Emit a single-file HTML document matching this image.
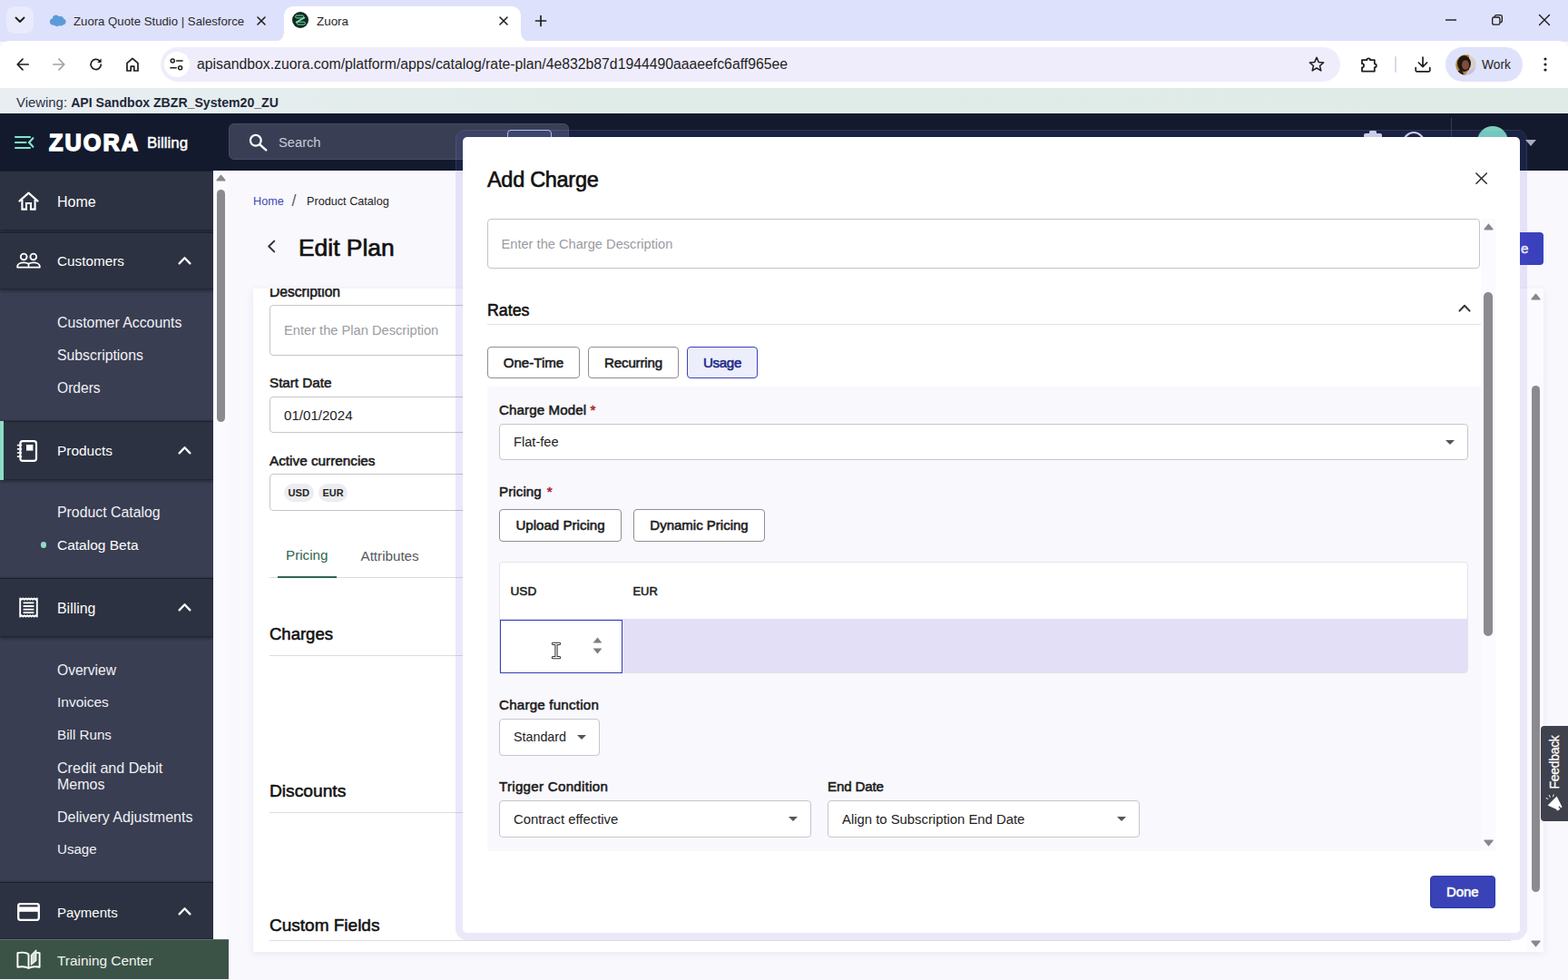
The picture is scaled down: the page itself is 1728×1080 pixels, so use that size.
<!DOCTYPE html>
<html lang="en">
<head>
<meta charset="utf-8">
<title>Zuora</title>
<style>
*{box-sizing:border-box;margin:0;padding:0}
html,body{width:1728px;height:1080px;overflow:hidden;background:#f9f8fd;font-family:"Liberation Sans",sans-serif;color:#111}
#root{position:relative;width:1728px;height:1080px;overflow:hidden}
.a{position:absolute}
.t{position:absolute;white-space:nowrap;line-height:20px;height:20px}
.b{font-weight:bold}
.sb{-webkit-text-stroke:.55px}
svg{position:absolute;overflow:visible}
/* CHROME */
#tabstrip{left:0;top:0;width:1728px;height:46px;background:#dee1fb}
#toolbar{left:0;top:45px;width:1728px;height:52px;background:#fff;border-radius:10px 10px 0 0}
#urlbar{left:177px;top:52px;width:1300px;height:38px;border-radius:19px;background:#efedfb}
#infobar{left:0;top:97px;width:1728px;height:28px;background:linear-gradient(90deg,#e9eef2 0,#e0ece8 40%,#e0ebe8 100%)}
/* APP HEADER */
#hdr{left:0;top:125px;width:1728px;height:63px;background:#131a2e}
#search{left:252px;top:136px;width:375px;height:40px;border-radius:6px;background:#393e54;border:1px solid #474d66}
/* SIDEBAR */
#side{left:0;top:188px;width:235px;height:848px;background:#393e52}
.sh{clip-path:inset(-6px 0 -6px 0);position:absolute;left:0;width:235px;background:#2c3241;border-top:1.5px solid #1b2131;border-bottom:1px solid #20263a;box-shadow:0 2px 3px rgba(0,0,0,.3),0 -1px 2px rgba(0,0,0,.2)}
.st{color:#fff;font-size:17px}
.si{color:#f1f1f6;font-size:16px}
/* MAIN */
#main{left:235px;top:188px;width:1493px;height:892px;background:#f9f8fd}
#card{left:279px;top:318px;width:1422px;height:731px;background:#fff;box-shadow:0 2px 8px rgba(120,110,180,.12)}
.lbl{font-size:15px;font-weight:bold;color:#1a1a1a}
.inp{position:absolute;background:#fff;border:1px solid #c6c6cb;border-radius:4px}
.hl{position:absolute;height:1px;background:#dcdce0}
.h2{font-size:19px;font-weight:bold;color:#111}
/* MODAL */
#modal{left:510px;top:151px;width:1165px;height:877px;background:#fff;border-radius:5px;}
.btn{-webkit-text-stroke:.55px;position:absolute;background:#fff;border:1px solid #8e8e93;border-radius:4px;font-size:15px;font-weight:bold;color:#1a1a1a;text-align:center;white-space:nowrap}
</style>
</head>
<body>
<div id="root">

<!-- ======= BROWSER CHROME ======= -->
<div id="tabstrip" class="a"></div>
<div id="toolbar" class="a"></div>
<!-- tab search button -->
<div class="a" style="left:7px;top:7px;width:30px;height:30px;border-radius:9px;background:#e9ebfc"></div>
<svg style="left:16px;top:18px" width="12" height="8" viewBox="0 0 12 8"><path d="M1.5 1.5 L6 6 L10.5 1.5" fill="none" stroke="#1f1f1f" stroke-width="1.9" stroke-linecap="round" stroke-linejoin="round"/></svg>
<!-- tab 1 favicon: salesforce cloud -->
<svg style="left:54px;top:15px" width="19" height="14" viewBox="0 0 19 14"><path d="M4.6 12.6a3.6 3.6 0 0 1-.9-7.1 4.1 4.1 0 0 1 7.3-2.3 3.7 3.7 0 0 1 5.3 2.6 3.4 3.4 0 0 1-1.1 6.6 3 3 0 0 1-3.9.6 3.4 3.4 0 0 1-4.6.2 3.6 3.6 0 0 1-2.1-.6z" fill="#5b9bd8"/></svg>
<div class="t" style="left:81px;top:14px;font-size:13.2px;color:#2a2a2e">Zuora Quote Studio | Salesforce</div>
<svg style="left:283px;top:18px" width="10" height="10" viewBox="0 0 10 10"><path d="M1 1L9 9M9 1L1 9" stroke="#1f1f1f" stroke-width="1.6" stroke-linecap="round"/></svg>
<!-- active tab -->
<div class="a" style="left:313px;top:7px;width:261px;height:39px;background:#fff;border-radius:10px 10px 0 0"></div>
<svg style="left:303px;top:36px" width="10" height="10" viewBox="0 0 10 10"><path d="M10 0V10H0A10 10 0 0 0 10 0Z" fill="#fff"/></svg>
<svg style="left:574px;top:36px" width="10" height="10" viewBox="0 0 10 10"><path d="M0 0V10H10A10 10 0 0 1 0 0Z" fill="#fff"/></svg>
<svg style="left:321.8px;top:13.3px" width="18" height="18" viewBox="0 0 18 18"><circle cx="9" cy="9" r="9" fill="#0f2a21"/><rect x="3.6" y="4" width="9" height="2.900" rx="1.450" fill="none" stroke="#7fe3b6" stroke-width="1"/><rect x="5.400" y="11.200" width="9" height="2.900" rx="1.450" fill="none" stroke="#7fe3b6" stroke-width="1"/><path d="M13.400 6.600L4.600 11.600" stroke="#7fe3b6" stroke-width="1.700" stroke-linecap="round"/></svg>
<div class="t" style="left:349px;top:14px;font-size:13.4px;color:#1f1f1f">Zuora</div>
<svg style="left:550px;top:18px" width="10" height="10" viewBox="0 0 10 10"><path d="M1 1L9 9M9 1L1 9" stroke="#1f1f1f" stroke-width="1.6" stroke-linecap="round"/></svg>
<!-- new tab -->
<svg style="left:590px;top:17px" width="12" height="12" viewBox="0 0 12 12"><path d="M6 .5V11.5M.5 6H11.5" stroke="#1f1f1f" stroke-width="1.7" stroke-linecap="round"/></svg>
<!-- window controls -->
<svg style="left:1593px;top:21px" width="12" height="2" viewBox="0 0 12 2"><path d="M0 1H12" stroke="#1a1a1a" stroke-width="1.4"/></svg>
<svg style="left:1644px;top:16px" width="12" height="12" viewBox="0 0 12 12"><rect x=".7" y="3" width="8.2" height="8.2" rx="1.8" fill="none" stroke="#1a1a1a" stroke-width="1.3"/><path d="M3.2 2.8V2.5A1.8 1.8 0 0 1 5 .7H9.4A1.9 1.9 0 0 1 11.3 2.6V7A1.8 1.8 0 0 1 9.5 8.8H9.2" fill="none" stroke="#1a1a1a" stroke-width="1.3"/></svg>
<svg style="left:1696px;top:16px" width="12" height="12" viewBox="0 0 12 12"><path d="M.5 .5L11.5 11.5M11.5 .5L.5 11.5" stroke="#1a1a1a" stroke-width="1.4" stroke-linecap="round"/></svg>

<div id="urlbar" class="a"></div>
<!-- nav icons -->
<svg style="left:18px;top:64px" width="14" height="14" viewBox="0 0 14 14"><path d="M13.2 7H1.4M7 1.2L1.2 7L7 12.8" fill="none" stroke="#1f1f1f" stroke-width="1.7" stroke-linecap="round" stroke-linejoin="round"/></svg>
<svg style="left:58px;top:64px" width="14" height="14" viewBox="0 0 14 14"><path d="M.8 7H12.6M7 1.2L12.8 7L7 12.8" fill="none" stroke="#a3a3a6" stroke-width="1.7" stroke-linecap="round" stroke-linejoin="round"/></svg>
<svg style="left:99px;top:64px" width="14" height="14" viewBox="0 0 14 14"><path d="M12.3 7.2A5.6 5.6 0 1 1 10.6 2.9" fill="none" stroke="#1f1f1f" stroke-width="1.7" stroke-linecap="round"/><path d="M12.6 .6V5H8.2Z" fill="#1f1f1f"/></svg>
<svg style="left:139px;top:63px" width="14" height="16" viewBox="0 0 14 16"><path d="M1 6.6L7 1.4L13 6.6V15H8.8V10.2H5.2V15H1Z" fill="none" stroke="#1f1f1f" stroke-width="1.7" stroke-linejoin="round"/></svg>
<!-- site info -->
<div class="a" style="left:181px;top:57px;width:28px;height:28px;border-radius:14px;background:#fff"></div>
<svg style="left:187px;top:64px" width="15" height="14" viewBox="0 0 15 14"><circle cx="3.2" cy="3" r="2" fill="none" stroke="#1f1f1f" stroke-width="1.5"/><path d="M7.6 3H14" stroke="#1f1f1f" stroke-width="1.6" stroke-linecap="round"/><circle cx="11.6" cy="10.8" r="2" fill="none" stroke="#1f1f1f" stroke-width="1.5"/><path d="M1 10.8H7.2" stroke="#1f1f1f" stroke-width="1.6" stroke-linecap="round"/></svg>
<div class="t" style="left:217px;top:61px;font-size:15.77px;color:#1f1f1f">apisandbox.zuora.com/platform/apps/catalog/rate-plan/4e832b87d1944490aaaeefc6aff965ee</div>
<!-- star -->
<svg style="left:1442px;top:62px" width="18" height="17" viewBox="0 0 18 17"><path d="M9 1.3L11.2 6.4L16.7 6.9L12.5 10.5L13.8 15.9L9 13L4.2 15.9L5.5 10.5L1.3 6.9L6.8 6.4Z" fill="none" stroke="#1f1f1f" stroke-width="1.5" stroke-linejoin="round"/></svg>
<!-- extensions -->
<svg style="left:1499px;top:61px" width="20" height="19" viewBox="0 0 20 19"><path d="M2 5.200H7.300A1.900 1.900 0 0 1 11.100 5.200H15.800V9.300A2 2 0 0 1 15.800 13.300V17.600H2V13.400A2.100 2.100 0 0 0 2 9.200Z" fill="none" stroke="#1f1f1f" stroke-width="1.800" stroke-linejoin="round"/></svg>
<div class="a" style="left:1537px;top:62px;width:2px;height:18px;background:#d9dbe9;border-radius:1px"></div>
<!-- download -->
<svg style="left:1559px;top:62px" width="18" height="18" viewBox="0 0 18 18"><path d="M9 1V11.4M4.4 7L9 11.6L13.6 7M1.2 12.6V15.4A1.4 1.4 0 0 0 2.6 16.8H15.4A1.4 1.4 0 0 0 16.8 15.4V12.6" fill="none" stroke="#1f1f1f" stroke-width="1.7" stroke-linecap="round" stroke-linejoin="round"/></svg>
<!-- profile pill -->
<div class="a" style="left:1593px;top:52px;width:85px;height:38px;border-radius:19px;background:#dfe2fb"></div>
<svg style="left:1604px;top:60px" width="23" height="23" viewBox="0 0 23 23"><defs><clipPath id="av"><circle cx="11.500" cy="11.500" r="11.200"/></clipPath><filter id="avb" x="-10%" y="-10%" width="120%" height="120%"><feGaussianBlur stdDeviation=".7"/></filter></defs><g clip-path="url(#av)"><g filter="url(#avb)"><rect x="-2" y="-2" width="27" height="27" fill="#b08a30"/><rect x="15" y="-2" width="10" height="27" fill="#d9cfc8"/><ellipse cx="9.500" cy="10" rx="7.500" ry="9" fill="#241712"/><ellipse cx="11" cy="11.500" rx="4" ry="5.200" fill="#7d4f36"/><path d="M11 23C12 18 16 15.500 24 15V24Z" fill="#cdbfe0"/><path d="M0 24C0 19 3 17 7 17L10 24Z" fill="#2a1c18"/></g></g></svg>
<div class="t" style="left:1633px;top:62px;font-size:13.8px;color:#1f1f1f">Work</div>
<svg style="left:1701px;top:63px" width="4" height="16" viewBox="0 0 4 16"><circle cx="2" cy="2" r="1.6" fill="#1f1f1f"/><circle cx="2" cy="8" r="1.6" fill="#1f1f1f"/><circle cx="2" cy="14" r="1.6" fill="#1f1f1f"/></svg>
<div id="infobar" class="a"></div>
<div class="t" style="left:18px;top:103px;font-size:14.9px;color:#2b3345">Viewing: <span class="b" style="font-size:14.1px;color:#1f2738">API Sandbox ZBZR_System20_ZU</span></div>

<!-- ======= APP HEADER ======= -->
<div id="hdr" class="a"></div>
<!-- hamburger -->
<svg style="left:16px;top:149px" width="22" height="16" viewBox="0 0 22 16"><path d="M1 2H17M1 8H12.500M1 14H17" stroke="#7fe8c5" stroke-width="2.100" stroke-linecap="round"/><path d="M20.4 3.2L16 8L20.4 12.800" fill="none" stroke="#7fe8c5" stroke-width="2.100" stroke-linecap="round" stroke-linejoin="round"/></svg>
<div class="t b" style="left:54px;top:143px;height:28px;line-height:28px;font-size:25.3px;letter-spacing:2px;color:#fff;-webkit-text-stroke:1.5px #fff">ZUORA</div>
<div class="t" style="left:162px;top:148px;font-size:16.9px;color:#fff;-webkit-text-stroke:.45px">Billing</div>
<div id="search" class="a"></div>
<svg style="left:274px;top:147px" width="21" height="20" viewBox="0 0 21 20"><circle cx="7.800" cy="7.800" r="5.900" fill="none" stroke="#fff" stroke-width="2.200"/><path d="M12.400 12.400L19.200 18.400" stroke="#fff" stroke-width="2.500" stroke-linecap="round"/></svg>
<div class="t" style="left:307px;top:147px;font-size:14.7px;color:#c9ccd6">Search</div>
<!-- ctrl-k hint -->
<div class="a" style="left:559px;top:143px;width:49px;height:26px;border:1.5px solid #bcc3e6;border-radius:4px;background:#3a4060"></div>
<!-- right header icons -->
<svg style="left:1502px;top:143px" width="22" height="24" viewBox="0 0 22 24"><rect x="1" y="4" width="20" height="19" rx="2" fill="#d8dae4"/><rect x="7" y="1" width="8" height="5" rx="1.5" fill="#d8dae4"/></svg>
<svg style="left:1545px;top:144px" width="26" height="26" viewBox="0 0 26 26"><circle cx="13" cy="13" r="11" fill="none" stroke="#d8dae4" stroke-width="2.2"/></svg>
<div class="a" style="left:1599px;top:130px;width:1px;height:53px;background:#353c58"></div>
<div class="a" style="left:1628px;top:139px;width:34px;height:34px;border-radius:17px;background:#7ad1ba"></div>
<svg style="left:1681px;top:154px" width="12" height="7" viewBox="0 0 12 7"><path d="M0 0H12L6 7Z" fill="#a9adbb"/></svg>

<!-- ======= MAIN ======= -->
<div id="main" class="a"></div>
<!-- sidebar scrollbar track -->
<div class="a" style="left:235px;top:188px;width:17px;height:848px;background:#fbfaff"></div>
<svg style="left:238px;top:192px" width="11" height="8" viewBox="0 0 11 8"><path d="M5.500 1.400L9.800 6.800H1.200Z" fill="#88888b" stroke="#88888b" stroke-width="1.600" stroke-linejoin="round"/></svg>
<div class="a" style="left:239px;top:209px;width:9px;height:256px;border-radius:4.5px;background:#8b8b8f"></div>
<!-- breadcrumb -->
<div class="t" style="left:279px;top:212px;font-size:12.7px;color:#3f49b3">Home</div>
<div class="t" style="left:321.500px;top:211px;font-size:17.500px;color:#5a5a60">/</div>
<div class="t" style="left:338px;top:212px;font-size:12.66px;color:#222">Product Catalog</div>
<svg style="left:294px;top:264px" width="10" height="15" viewBox="0 0 10 15"><path d="M8.2 1.6L2.2 7.5L8.2 13.4" fill="none" stroke="#333" stroke-width="2" stroke-linecap="round" stroke-linejoin="round"/></svg>
<div class="t" style="left:329px;top:256px;height:35px;line-height:35px;font-size:26.4px;color:#111;-webkit-text-stroke:.7px">Edit Plan</div>
<!-- blue button behind modal (right) -->
<div class="a" style="left:1640px;top:256px;width:61px;height:36px;border-radius:4px;background:#3a41bd"></div>
<div class="t" style="left:1676px;top:264px;font-size:15px;color:#fff;-webkit-text-stroke:.45px">e</div>
<div id="card" class="a"></div>
<div class="a" style="left:279px;top:318px;width:1386px;height:20px;overflow:hidden"><div class="t lbl sb" style="left:18px;top:-6px;font-size:15.6px;font-weight:normal">Description</div></div>
<div class="inp" style="left:297px;top:336.4px;width:1340px;height:55.4px"></div>
<div class="t" style="left:313px;top:354px;font-size:14.66px;color:#9b9ba1">Enter the Plan Description</div>
<div class="t sb" style="left:297px;top:412px;font-size:15.2px;color:#1a1a1a">Start Date</div>
<div class="inp" style="left:297px;top:437px;width:1340px;height:40px"></div>
<div class="t" style="left:313px;top:448px;font-size:15.1px;color:#222">01/01/2024</div>
<div class="t sb" style="left:297px;top:498px;font-size:15.3px;color:#1a1a1a">Active currencies</div>
<div class="inp" style="left:297px;top:522.4px;width:1340px;height:40.4px"></div>
<div class="a" style="left:313px;top:532.6px;width:32.5px;height:20px;border-radius:10px;background:#ececf1"></div>
<div class="t b" style="left:317.5px;top:533px;font-size:11.1px;color:#222">USD</div>
<div class="a" style="left:351px;top:532.6px;width:32px;height:20px;border-radius:10px;background:#ececf1"></div>
<div class="t b" style="left:355.5px;top:533px;font-size:10.9px;color:#222">EUR</div>
<div class="t" style="left:315px;top:602px;font-size:15.2px;color:#2f6650">Pricing</div>
<div class="t" style="left:397.5px;top:603px;font-size:15.2px;color:#55585c">Attributes</div>
<div class="hl" style="left:297px;top:636px;width:1340px"></div>
<div class="a" style="left:306px;top:634.6px;width:65px;height:2px;background:#2f6650"></div>
<div class="t" style="left:297px;top:689px;font-size:18.5px;-webkit-text-stroke:.55px">Charges</div>
<div class="hl" style="left:297px;top:722px;width:1340px"></div>
<div class="t" style="left:297px;top:862px;font-size:19.2px;-webkit-text-stroke:.55px">Discounts</div>
<div class="hl" style="left:297px;top:895px;width:1340px"></div>
<div class="t" style="left:297px;top:1010px;font-size:19px;-webkit-text-stroke:.55px">Custom Fields</div>
<div class="hl" style="left:297px;top:1036px;width:1368px"></div>
<!-- outer scrollbar -->
<div class="a" style="left:1683px;top:318px;width:18px;height:730px;background:#fbfaff"></div>
<svg style="left:1687px;top:323px" width="11" height="8" viewBox="0 0 11 8"><path d="M5.500 1.400L9.800 6.800H1.200Z" fill="#88888b" stroke="#88888b" stroke-width="1.600" stroke-linejoin="round"/></svg>
<div class="a" style="left:1688px;top:425px;width:9px;height:558px;border-radius:4.5px;background:#8b8b8f"></div>
<svg style="left:1687px;top:1036px" width="11" height="8" viewBox="0 0 11 8"><path d="M5.500 6.600L9.800 1.200H1.200Z" fill="#88888b" stroke="#88888b" stroke-width="1.600" stroke-linejoin="round"/></svg>
<!-- feedback tab -->
<div class="a" style="left:1698px;top:800px;width:30px;height:105px;border-radius:4px 0 0 4px;background:#3f414c"></div>
<div class="a" style="left:1698px;top:800px;width:30px;height:105px"><div class="t" style="left:-20px;top:30px;width:70px;text-align:center;font-size:14px;letter-spacing:-.3px;color:#fff;-webkit-text-stroke:.3px;transform:rotate(-90deg);transform-origin:35px 10px">Feedback</div></div>
<svg style="left:1703px;top:875px" width="20" height="20" viewBox="0 0 20 20"><path d="M12.6 2.6L18.6 14.6L16 15.600L15.600 17.400L12.800 18.600L12.400 17L2.600 12.400Z" fill="#fff"/><circle cx="15.600" cy="14.400" r="1" fill="#3f414c"/><path d="M2.800 5.400L1 4.600M5.200 3.400L4.400 1.400M8.600 2.800L9.200 .800" stroke="#fff" stroke-width="1" stroke-linecap="round"/></svg>

<!-- ======= SIDEBAR ======= -->
<div id="side" class="a"></div>
<!-- section headers -->
<div class="sh" style="top:188px;height:66px;box-shadow:0 2px 3px rgba(0,0,0,.35)"></div>
<div class="sh" style="top:256px;height:63px"></div>
<div class="sh" style="top:464px;height:65px"></div>
<div class="a" style="left:0;top:464px;width:4px;height:65px;background:#8fdcc5"></div>
<div class="sh" style="top:637px;height:65px"></div>
<div class="sh" style="top:972px;height:63px"></div>
<!-- Home -->
<svg style="left:20px;top:211px" width="23" height="21" viewBox="0 0 23 21"><path d="M1.4 10.6L11.5 1.6L21.6 10.6" fill="none" stroke="#fff" stroke-width="2.1" stroke-linecap="round" stroke-linejoin="round"/><path d="M4.4 9V19.6H9V13H14V19.6H18.6V9" fill="none" stroke="#fff" stroke-width="2.1" stroke-linejoin="miter"/></svg>
<div class="t st" style="left:63px;top:213px;font-size:16px">Home</div>
<!-- Customers -->
<svg style="left:18px;top:278px" width="27" height="18" viewBox="0 0 27 18"><circle cx="8.2" cy="5" r="3.4" fill="none" stroke="#fff" stroke-width="1.9"/><circle cx="18.8" cy="5" r="3.4" fill="none" stroke="#fff" stroke-width="1.9"/><path d="M1.2 16.6V15.4C1.2 12.4 5.6 11.4 8.2 11.4C9.8 11.4 12 11.8 13.5 12.8C15 11.8 17.2 11.4 18.8 11.4C21.4 11.4 25.8 12.4 25.8 15.4V16.6Z" fill="none" stroke="#fff" stroke-width="1.9" stroke-linejoin="round"/><path d="M13.5 12.8V16.6" stroke="#fff" stroke-width="1.6"/></svg>
<div class="t st" style="left:63px;top:278px;font-size:15.3px">Customers</div>
<svg style="left:196px;top:282px" width="15" height="10" viewBox="0 0 15 10"><path d="M1.6 8.4L7.5 2.2L13.4 8.4" fill="none" stroke="#fff" stroke-width="2.3" stroke-linecap="round" stroke-linejoin="round"/></svg>
<div class="t si" style="left:63px;top:346px;font-size:15.85px">Customer Accounts</div>
<div class="t si" style="left:63px;top:382px;font-size:15.8px">Subscriptions</div>
<div class="t si" style="left:63px;top:418px;font-size:15.6px">Orders</div>
<!-- Products -->
<svg style="left:19px;top:485px" width="23" height="24" viewBox="0 0 23 24"><rect x="3.4" y="1.2" width="17.6" height="21.6" rx="2.6" fill="none" stroke="#fff" stroke-width="2.2"/><rect x="10" y="5" width="7.4" height="6.6" fill="#fff"/><path d="M.6 5.6H4.4M.6 9.8H4.4M.6 14H4.4M.6 18.2H4.4" stroke="#fff" stroke-width="1.7" stroke-linecap="round"/></svg>
<div class="t st" style="left:63px;top:487px;font-size:15.45px">Products</div>
<svg style="left:196px;top:491px" width="15" height="10" viewBox="0 0 15 10"><path d="M1.6 8.4L7.5 2.2L13.4 8.4" fill="none" stroke="#fff" stroke-width="2.3" stroke-linecap="round" stroke-linejoin="round"/></svg>
<div class="t si" style="left:63px;top:555px;font-size:15.85px">Product Catalog</div>
<div class="a" style="left:44.6px;top:596.8px;width:6.8px;height:6.8px;border-radius:50%;background:#8fdcc5"></div>
<div class="t si" style="left:63px;top:591px;font-size:15.5px;color:#fff">Catalog Beta</div>
<!-- Billing -->
<svg style="left:20px;top:658px" width="23" height="23" viewBox="0 0 23 23"><path d="M2.2 1.4l1.55 1.3 1.55-1.3 1.55 1.3 1.55-1.3 1.55 1.3 1.55-1.3 1.55 1.3 1.55-1.3 1.55 1.3 1.55-1.3 1.55 1.3 1.55-1.3V21.6l-1.55-1.3-1.55 1.3-1.55-1.3-1.55 1.3-1.55-1.3-1.55 1.3-1.55-1.3-1.55 1.3-1.55-1.3-1.55 1.3-1.55-1.3-1.55 1.3Z" fill="none" stroke="#fff" stroke-width="1.9" stroke-linejoin="round"/><path d="M5.6 6.4H17.4M5.6 10H17.4M5.6 13.6H17.4M5.6 17.2H17.4" stroke="#fff" stroke-width="1.8"/></svg>
<div class="t st" style="left:63px;top:661px;font-size:15.9px">Billing</div>
<svg style="left:196px;top:664px" width="15" height="10" viewBox="0 0 15 10"><path d="M1.6 8.4L7.5 2.2L13.4 8.4" fill="none" stroke="#fff" stroke-width="2.3" stroke-linecap="round" stroke-linejoin="round"/></svg>
<div class="t si" style="left:63px;top:729px;font-size:15.6px">Overview</div>
<div class="t si" style="left:63px;top:764px;font-size:15.5px">Invoices</div>
<div class="t si" style="left:63px;top:800px;font-size:15.2px">Bill Runs</div>
<div class="t si" style="left:63px;top:836px;font-size:16.1px">Credit and Debit</div>
<div class="t si" style="left:63px;top:855px;font-size:16px">Memos</div>
<div class="t si" style="left:63px;top:891px;font-size:16px">Delivery Adjustments</div>
<div class="t si" style="left:63px;top:926px;font-size:15.1px">Usage</div>
<!-- Payments -->
<svg style="left:19px;top:995px" width="25" height="20" viewBox="0 0 25 20"><rect x="1.2" y="1.2" width="22.6" height="17.6" rx="2.2" fill="none" stroke="#fff" stroke-width="2.3"/><rect x="1.2" y="4.4" width="22.6" height="5.4" fill="#fff"/></svg>
<div class="t st" style="left:63px;top:996px;font-size:15px">Payments</div>
<svg style="left:196px;top:999px" width="15" height="10" viewBox="0 0 15 10"><path d="M1.6 8.4L7.5 2.2L13.4 8.4" fill="none" stroke="#fff" stroke-width="2.3" stroke-linecap="round" stroke-linejoin="round"/></svg>
<!-- Training center -->
<div class="a" style="left:0;top:1035px;width:252px;height:43.5px;background:#3b5347;border-top:1px solid #5d6f68"></div>
<svg style="left:18px;top:1046px" width="27" height="23" viewBox="0 0 27 23"><path d="M13.5 5.4C10.6 3.6 5.6 3.4 1.4 4.2V19.8C5.6 19 10.6 19.2 13.5 21C16.4 19.2 21.4 19 25.6 19.8V4.2C24.4 4 23.4 3.9 22.2 3.9" fill="none" stroke="#fff" stroke-width="1.9" stroke-linejoin="round"/><path d="M13.5 5.4V21" stroke="#fff" stroke-width="1.9"/><path d="M16.4 6.6L21.8 1.2V12.6L16.4 17Z" fill="#cfe0d8" stroke="#fff" stroke-width="1.2" stroke-linejoin="round"/></svg>
<div class="t" style="left:63px;top:1049px;font-size:15.4px;color:#f0f4f1">Training Center</div>

<!-- ======= MODAL ======= -->
<div class="a" style="left:500px;top:140px;width:1185px;height:48px;overflow:hidden"><div class="a" style="left:10px;top:11px;width:1165px;height:877px;border-radius:5px;box-shadow:0 0 0 8px rgba(90,110,255,.11)"></div><div class="a" style="left:2px;top:3px;width:1181px;height:893px;border-radius:10px;border:1px solid rgba(255,255,255,.09)"></div></div>
<div class="a" style="left:500px;top:188px;width:1185px;height:860px;overflow:hidden"><div class="a" style="left:10px;top:-37px;width:1165px;height:877px;border-radius:5px;box-shadow:0 0 0 8px rgba(98,81,217,.13)"></div></div>
<div id="modal" class="a"></div>
<div class="t" style="left:537px;top:183px;height:30px;line-height:30px;letter-spacing:-.3px;font-size:23.5px;color:#111;-webkit-text-stroke:.6px">Add Charge</div>
<svg style="left:1626px;top:189.800px" width="13.200" height="13.200" viewBox="0 0 14 14"><path d="M1 1L13 13M13 1L1 13" stroke="#333" stroke-width="1.7" stroke-linecap="round"/></svg>
<div class="inp" style="left:537px;top:241px;width:1094px;height:55px;border-color:#c4c4c9"></div>
<div class="t" style="left:552.5px;top:259px;font-size:14.65px;color:#9b9ba1">Enter the Charge Description</div>
<!-- Rates -->
<div class="t" style="left:537px;top:331px;height:22px;line-height:22px;font-size:17.8px;color:#111;-webkit-text-stroke:.55px">Rates</div>
<svg style="left:1607px;top:335px" width="14" height="9" viewBox="0 0 14 9"><path d="M1.4 7.6L7 1.8L12.6 7.6" fill="none" stroke="#333" stroke-width="2" stroke-linecap="round" stroke-linejoin="round"/></svg>
<div class="hl" style="left:537px;top:357px;width:1095px;background:#e2e2e6"></div>
<div class="btn sb" style="left:537px;top:382px;width:102px;height:35px;line-height:33px;font-size:15.1px;font-weight:normal">One-Time</div>
<div class="btn sb" style="left:648px;top:382px;width:100px;height:35px;line-height:33px;font-size:15.1px;letter-spacing:-.18px;font-weight:normal">Recurring</div>
<div class="btn sb" style="left:757px;top:382px;width:78px;height:35px;line-height:33px;font-size:15.1px;letter-spacing:-.3px;font-weight:normal;border-color:#3b43b8;background:#eceefb;color:#1c2686">Usage</div>
<!-- gray panel -->
<div class="a" style="left:537px;top:426px;width:1095px;height:512px;border-radius:4px 0 0 0;background:#f9f8fd"></div>
<div class="t sb" style="left:550px;top:441.5px;font-size:15.1px;letter-spacing:.12px;color:#1a1a1a">Charge Model <span style="color:#b0272d">*</span></div>
<div class="inp" style="left:550px;top:467px;width:1068px;height:40px"></div>
<div class="t" style="left:566px;top:477px;font-size:14.65px;color:#222">Flat-fee</div>
<svg style="left:1593px;top:484.5px" width="10" height="5" viewBox="0 0 10 5"><path d="M0 0H10L5 5Z" fill="#555"/></svg>
<div class="t sb" style="left:550px;top:531.5px;font-size:15.1px;letter-spacing:.1px;color:#1a1a1a">Pricing <span style="color:#b0272d;margin-left:1.5px">*</span></div>
<div class="btn sb" style="left:550px;top:561px;width:135px;height:36px;line-height:34px;font-size:15.1px;font-weight:normal">Upload Pricing</div>
<div class="btn sb" style="left:698px;top:561px;width:145px;height:36px;line-height:34px;font-size:15px;font-weight:normal">Dynamic Pricing</div>
<!-- price table -->
<div class="a" style="left:550px;top:619px;width:1068px;height:123px;background:#fff;border:1px solid #e4e3ea;border-radius:4px;overflow:hidden"><div class="a" style="left:0;top:62px;width:1068px;height:61px;background:#e2dff6"></div></div>
<div class="t sb" style="left:562.5px;top:641.5px;font-size:13.6px;color:#1a1a1a">USD</div>
<div class="t sb" style="left:697.5px;top:641.5px;font-size:12.9px;color:#1a1a1a">EUR</div>
<div class="a" style="left:550.5px;top:682.5px;width:135.5px;height:59.3px;background:#fff;border:1.6px solid #363db0"></div>
<svg style="left:653px;top:702px" width="11" height="19" viewBox="0 0 11 19"><path d="M5.5 .6L10.4 6.6H.6Z" fill="#7d7d82"/><path d="M5.5 18.4L10.4 12.4H.6Z" fill="#7d7d82"/></svg>
<!-- I-beam cursor -->
<svg style="left:608px;top:708px" width="10" height="18" viewBox="0 0 11 20"><path d="M1.5 1.5H4.2C5 1.5 5.5 2 5.5 2.6C5.5 2 6 1.5 6.8 1.5H9.5M1.5 18.5H4.2C5 18.5 5.5 18 5.5 17.4C5.5 18 6 18.500 6.800 18.500H9.500M5.500 2.600V17.400" fill="none" stroke="#333" stroke-width="3.6" stroke-linecap="round" stroke-linejoin="round"/><path d="M1.500 1.500H4.200C5 1.500 5.500 2 5.500 2.600C5.500 2 6 1.500 6.800 1.500H9.500M1.500 18.500H4.200C5 18.500 5.500 18 5.500 17.400C5.500 18 6 18.500 6.800 18.500H9.500M5.500 2.600V17.400" fill="none" stroke="#fff" stroke-width="1.3" stroke-linecap="round" stroke-linejoin="round"/></svg>
<div class="t sb" style="left:550px;top:766.5px;font-size:15.1px;letter-spacing:.23px;color:#1a1a1a">Charge function</div>
<div class="inp" style="left:550px;top:792px;width:111px;height:41px"></div>
<div class="t" style="left:566px;top:802px;font-size:14.3px;color:#222">Standard</div>
<svg style="left:636.3px;top:809.5px" width="10" height="5" viewBox="0 0 10 5"><path d="M0 0H10L5 5Z" fill="#555"/></svg>
<div class="t sb" style="left:550px;top:856.5px;font-size:15.1px;letter-spacing:.29px;color:#1a1a1a">Trigger Condition</div>
<div class="inp" style="left:550px;top:882px;width:344px;height:41px"></div>
<div class="t" style="left:566px;top:892.5px;font-size:14.85px;color:#222">Contract effective</div>
<svg style="left:869.3px;top:899.5px" width="10" height="5" viewBox="0 0 10 5"><path d="M0 0H10L5 5Z" fill="#555"/></svg>
<div class="t sb" style="left:912px;top:856.5px;font-size:15.1px;letter-spacing:-.15px;color:#1a1a1a">End Date</div>
<div class="inp" style="left:912px;top:882px;width:344px;height:41px"></div>
<div class="t" style="left:928px;top:892.5px;font-size:14.85px;color:#222">Align to Subscription End Date</div>
<svg style="left:1231.3px;top:899.5px" width="10" height="5" viewBox="0 0 10 5"><path d="M0 0H10L5 5Z" fill="#555"/></svg>
<!-- inner scrollbar -->
<div class="a" style="left:1632px;top:241px;width:16px;height:697px;background:#fbfaff"></div>
<svg style="left:1634.5px;top:246px" width="11" height="8" viewBox="0 0 11 8"><path d="M5.500 1.400L9.800 6.800H1.200Z" fill="#88888b" stroke="#88888b" stroke-width="1.600" stroke-linejoin="round"/></svg>
<div class="a" style="left:1635px;top:322px;width:9.5px;height:379px;border-radius:4.75px;background:#8b8b8f"></div>
<svg style="left:1634.5px;top:925px" width="11" height="8" viewBox="0 0 11 8"><path d="M5.500 6.600L9.800 1.200H1.200Z" fill="#88888b" stroke="#88888b" stroke-width="1.600" stroke-linejoin="round"/></svg>
<div class="a" style="left:1576.3px;top:965px;width:72px;height:36px;border-radius:4px;background:#3942b6;border:1px solid #2f38a6"></div>
<div class="t sb" style="left:1594px;top:973px;font-size:14.9px;color:#fff">Done</div>

</div>
</body>
</html>
